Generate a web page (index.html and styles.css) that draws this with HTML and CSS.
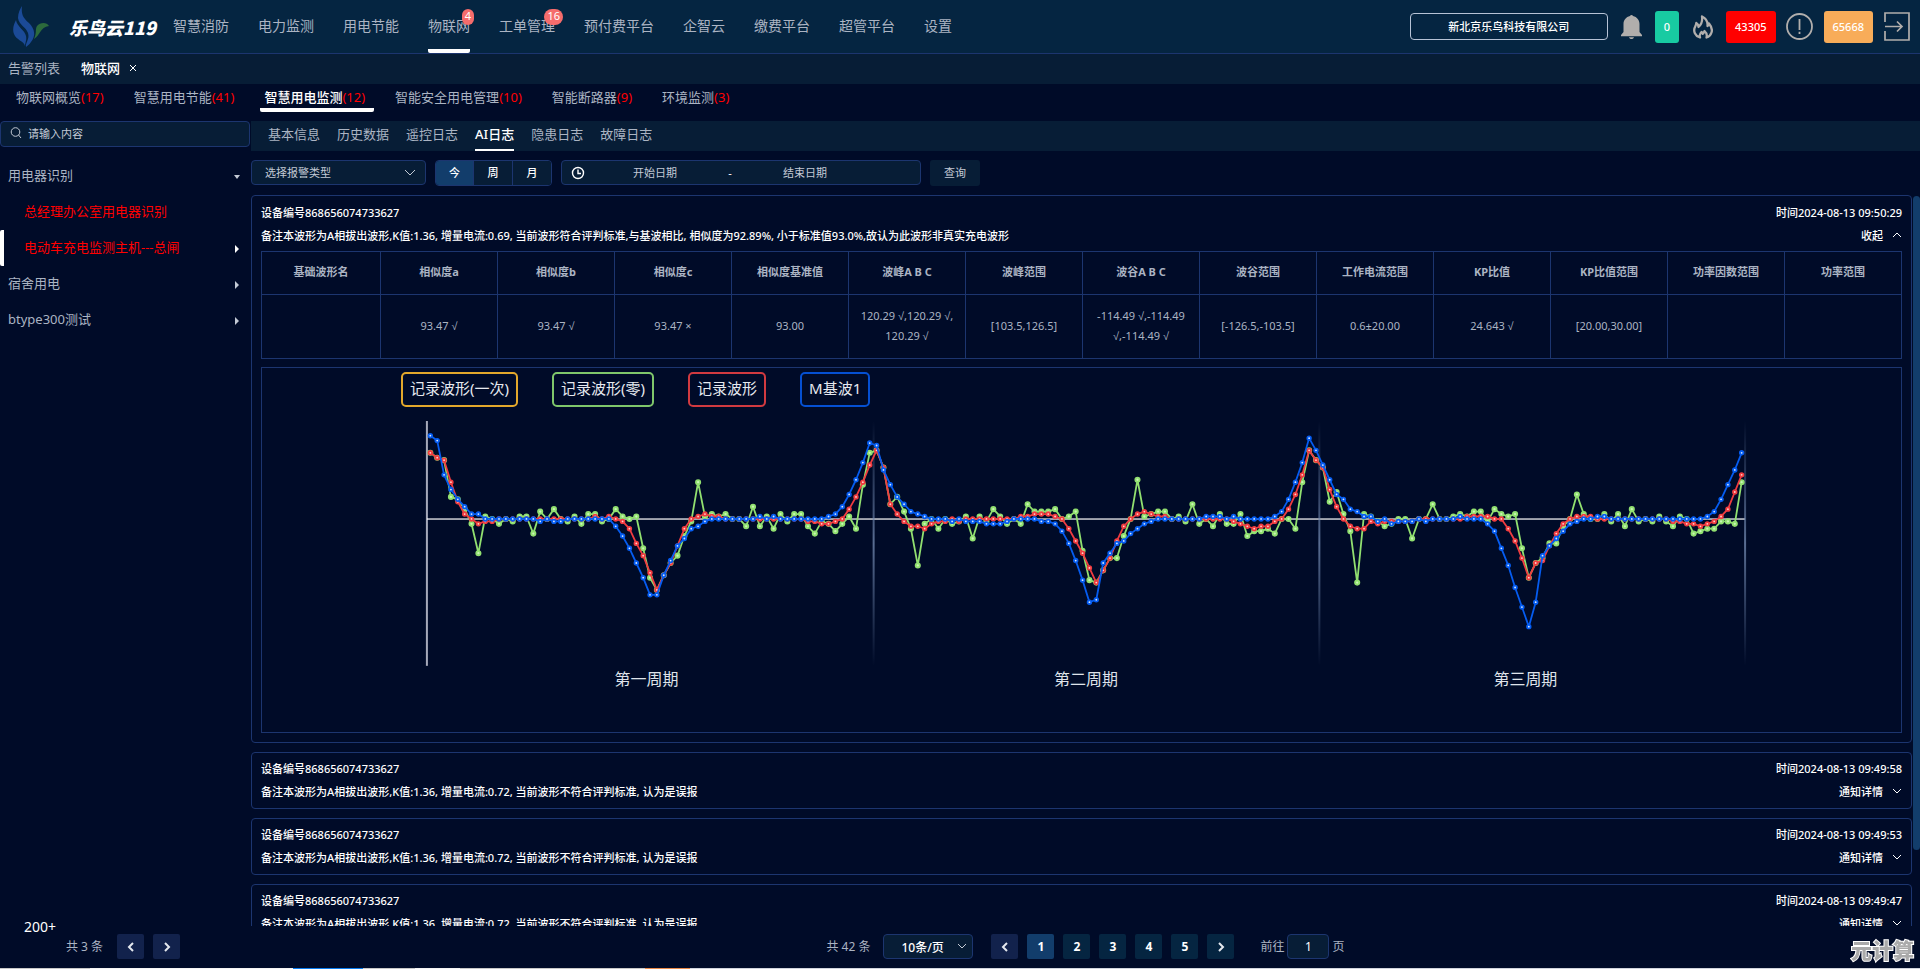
FILE: index.html
```html
<!DOCTYPE html>
<html lang="zh-CN">
<head>
  <meta charset="UTF-8">
  <title>乐鸟云119</title>
  <link rel="stylesheet" href="styles.css">
</head>
<body>

  <!-- 顶部导航 -->
  <header class="header">
    <svg class="logo" viewBox="0 0 36 41">
      <path fill="#1b4a97" d="M9 0 C8 8 10 12 16 17 C22 23 23 30 18 36 C16 39 14 40 13 41 C12 37 17 33 15 27 C13 21 6 19 5 12 C5 7 7 3 9 0z"/>
      <path fill="#1b4a97" d="M3 14 C4 21 12 24 13 30 C14 34 12 37 12 40 C11 35 3 34 1 28 C-1 23 1 18 3 14z"/>
      <path fill="#2c6a3c" d="M36 20 C34 16 27 16 24 20 C22 23 24 27 21 33 C27 30 27 21 36 20z"/>
    </svg>
    <h1 class="brand">乐鸟云119</h1>
    <nav class="top-nav">
      <a href="#">智慧消防</a>
      <a href="#">电力监测</a>
      <a href="#">用电节能</a>
      <a href="#" class="active">物联网<span class="badge">4</span></a>
      <a href="#">工单管理<span class="badge">16</span></a>
      <a href="#">预付费平台</a>
      <a href="#">企智云</a>
      <a href="#">缴费平台</a>
      <a href="#">超管平台</a>
      <a href="#">设置</a>
    </nav>
    <div class="tools">
      <input class="company" type="text" aria-label="公司" value="新北京乐鸟科技有限公司" readonly>
      <svg class="bell" viewBox="0 0 21 25"><path fill="#b1aeac" d="M9 2a1.6 1.6 0 0 1 3 0c4 1 6.500 4 6.500 8v8l2.500 3v1.200H0V21l2.500-3v-8c0-4 2.500-7 6.500-8zM8 23.200h5c-.5 2.400-4.500 2.400-5 0z"/></svg>
      <button class="count green">0</button>
      <svg class="flame" viewBox="0 0 20 24"><path fill="none" stroke="#b1aeac" stroke-width="2.300" stroke-linejoin="round" d="M7 22.500C2 21 0 16 2 12c.6-1.500 1.200-2.600 1.300-4C5 9 5.500 10.500 5.500 12 9 9 9.500 5 9 1.500c4 2 6 5.500 5.500 9.500 1-.3 1.400-1 1.500-2.500 2.500 3 3.500 6 2.500 9-.8 2.600-2.500 4.300-5 5 .8-2.500.3-4.500-2-6.500-.4 1.500-.8 2-1.800 2.800-.3-1-.6-1.300-1.200-1.800C7 18.500 6 20 7 22.500z"/></svg>
      <button class="count red">43305</button>
      <svg class="warn" viewBox="0 0 27 27"><circle cx="13.500" cy="13.500" r="12.500" fill="none" stroke="#b1aeac" stroke-width="1.800"/><path stroke="#b1aeac" stroke-width="1.800" d="M13.500 6v11M13.500 18.800v2.200"/></svg>
      <button class="count orange">65668</button>
      <svg class="exit" viewBox="0 0 26 29"><path fill="none" stroke="#b1aeac" stroke-width="1.700" d="M1 10V1h24v27H1v-9M1 14.500h17M13 9.500l5 5-5 5"/></svg>
    </div>
  </header>

  <!-- 已打开的标签 -->
  <div class="page-tabs">
    <a href="#">告警列表</a>
    <a href="#" class="active">物联网</a>
    <button class="close" aria-label="关闭"><svg viewBox="0 0 8 8"><path stroke="#fff" d="M1 1l6 6M7 1L1 7"/></svg></button>
  </div>

  <nav class="sub-nav">
    <a href="#">物联网概览<span>(17)</span></a>
    <a href="#">智慧用电节能<span>(41)</span></a>
    <a href="#" class="active">智慧用电监测<span>(12)</span></a>
    <a href="#">智能安全用电管理<span>(10)</span></a>
    <a href="#">智能断路器<span>(9)</span></a>
    <a href="#">环境监测<span>(3)</span></a>
  </nav>

  <div class="content">
    <!-- 左侧设备树 -->
    <aside class="sidebar">
      <label class="search">
        <svg viewBox="0 0 12 12"><circle cx="5.500" cy="5" r="4.300" fill="none" stroke="#c3cad5"/><path stroke="#c3cad5" d="M8.500 8l2.500 3"/></svg>
        <input type="text" placeholder="请输入内容">
      </label>
      <ul class="tree">
        <li>用电器识别<svg viewBox="0 0 6 6"><path fill="#c3cad5" d="M0 1h6L3 5z"/></svg></li>
        <li class="child">总经理办公室用电器识别</li>
        <li class="child current">电动车充电监测主机---总闸<svg viewBox="0 0 6 8"><path fill="#fff" d="M1 0l4 4-4 4z"/></svg></li>
        <li>宿舍用电<svg viewBox="0 0 6 8"><path fill="#c3cad5" d="M1 0l4 4-4 4z"/></svg></li>
        <li>btype300测试<svg viewBox="0 0 6 8"><path fill="#c3cad5" d="M1 0l4 4-4 4z"/></svg></li>
      </ul>
      <div class="over">200+</div>
      <div class="pager side-pager">
        <span class="total">共 3 条</span>
        <button class="arrow" aria-label="上一页"><svg viewBox="0 0 8 10"><path d="M6 1L2 5l4 4"/></svg></button>
        <button class="arrow" aria-label="下一页"><svg viewBox="0 0 8 10"><path d="M2 1l4 4-4 4"/></svg></button>
      </div>
    </aside>

    <main class="main">
      <nav class="log-tabs">
        <a href="#">基本信息</a>
        <a href="#">历史数据</a>
        <a href="#">遥控日志</a>
        <a href="#" class="active">AI日志</a>
        <a href="#">隐患日志</a>
        <a href="#">故障日志</a>
      </nav>

      <!-- 筛选条件 -->
      <div class="filter">
        <div class="select-box type">
          <select aria-label="报警类型"><option>选择报警类型</option></select>
          <svg viewBox="0 0 10 6"><path d="M0 0l5 5 5-5"/></svg>
        </div>
        <div class="range-btns">
          <button class="on">今</button><button>周</button><button>月</button>
        </div>
        <div class="dates">
          <svg viewBox="0 0 14 14"><circle cx="7" cy="7" r="5.500"/><path d="M7 3.500V7.500h3"/></svg>
          <input type="text" aria-label="开始日期" placeholder="开始日期">
          <span>-</span>
          <input type="text" aria-label="结束日期" placeholder="结束日期">
        </div>
        <button class="query">查询</button>
      </div>

      <!-- 日志列表 -->
      <div class="list-wrap">
        <div class="list">
          <section class="card">
            <div class="line"><span>设备编号868656074733627</span><span>时间2024-08-13 09:50:29</span></div>
            <div class="line">
              <span>备注本波形为A相拔出波形,K值:1.36, 增量电流:0.69, 当前波形符合评判标准,与基波相比, 相似度为92.89%, 小于标准值93.0%,故认为此波形非真实充电波形</span>
              <button class="toggle">收起<svg viewBox="0 0 8 5"><path d="M0 5l4-4 4 4"/></svg></button>
            </div>
            <table class="wave-table">
              <tr>
                <th class="name">基础波形名</th><th>相似度a</th><th>相似度b</th><th>相似度c</th><th>相似度基准值</th>
                <th>波峰A B C</th><th>波峰范围</th><th>波谷A B C</th><th>波谷范围</th><th>工作电流范围</th>
                <th>KP比值</th><th>KP比值范围</th><th>功率因数范围</th><th>功率范围</th>
              </tr>
              <tr>
                <td></td>
                <td>93.47 <i>√</i></td>
                <td>93.47 <i>√</i></td>
                <td>93.47 ×</td>
                <td>93.00</td>
                <td>120.29 <i>√</i>,120.29 <i>√</i>,<br>120.29 <i>√</i></td>
                <td>[103.5,126.5]</td>
                <td>-114.49 <i>√</i>,-114.49<br><i>√</i>,-114.49 <i>√</i></td>
                <td>[-126.5,-103.5]</td>
                <td>0.6±20.00</td>
                <td>24.643 <i>√</i></td>
                <td>[20.00,30.00]</td>
                <td></td>
                <td></td>
              </tr>
            </table>
            <div class="chart">
              <div class="legend">
                <button class="yellow">记录波形(一次)</button>
                <button class="lime">记录波形(零)</button>
                <button class="crimson">记录波形</button>
                <button class="blue">M基波1</button>
              </div>
              <svg id="wave" class="wave" viewBox="0 0 1640 325">
                <defs>
                  <linearGradient id="fade" x1="0" y1="0" x2="0" y2="1">
                    <stop offset="0" stop-color="#6f86ad" stop-opacity="0"/>
                    <stop offset="0.500" stop-color="#6f86ad" stop-opacity="0.800"/>
                    <stop offset="1" stop-color="#6f86ad" stop-opacity="0"/>
                  </linearGradient>
                </defs>
              </svg>
            </div>
          </section>

          <section class="card">
            <div class="line"><span>设备编号868656074733627</span><span>时间2024-08-13 09:49:58</span></div>
            <div class="line">
              <span>备注本波形为A相拔出波形,K值:1.36, 增量电流:0.72, 当前波形不符合评判标准, 认为是误报</span>
              <button class="toggle">通知详情<svg viewBox="0 0 8 5"><path d="M0 0l4 4 4-4"/></svg></button>
            </div>
          </section>

          <section class="card">
            <div class="line"><span>设备编号868656074733627</span><span>时间2024-08-13 09:49:53</span></div>
            <div class="line">
              <span>备注本波形为A相拔出波形,K值:1.36, 增量电流:0.72, 当前波形不符合评判标准, 认为是误报</span>
              <button class="toggle">通知详情<svg viewBox="0 0 8 5"><path d="M0 0l4 4 4-4"/></svg></button>
            </div>
          </section>

          <section class="card">
            <div class="line"><span>设备编号868656074733627</span><span>时间2024-08-13 09:49:47</span></div>
            <div class="line">
              <span>备注本波形为A相拔出波形,K值:1.36, 增量电流:0.72, 当前波形不符合评判标准, 认为是误报</span>
              <button class="toggle">通知详情<svg viewBox="0 0 8 5"><path d="M0 0l4 4 4-4"/></svg></button>
            </div>
          </section>
        </div>
        <div class="scrollbar"><div class="thumb"></div></div>
      </div>

      <div class="pager main-pager">
        <span class="total">共 42 条</span>
        <div class="select-box size">
          <select aria-label="每页条数"><option>10条/页</option></select>
          <svg viewBox="0 0 10 6"><path d="M1 0l4 4 4-4"/></svg>
        </div>
        <button class="arrow" aria-label="上一页"><svg viewBox="0 0 8 10"><path d="M6 1L2 5l4 4"/></svg></button>
        <button class="on">1</button>
        <button>2</button>
        <button>3</button>
        <button>4</button>
        <button>5</button>
        <button aria-label="下一页"><svg viewBox="0 0 8 10"><path d="M2 1l4 4-4 4"/></svg></button>
        <label class="jump">前往<input type="text" value="1">页</label>
      </div>
    </main>
  </div>

  <div class="bottom-strip"></div>
  <div class="watermark">元计算</div>

  <script src="wave.js"></script>
</body>
</html>
```

FILE: styles.css
```css
* {
  box-sizing: border-box;
}
body {
  margin: 0;
  height: 100vh;
  overflow: hidden;
  display: flex;
  flex-direction: column;
  background: #000b28;
  color: #fff;
  font-family: "Noto Sans", "Noto Sans CJK SC", sans-serif;
  font-size: 11px;
}
a {
  color: #abb4c3;
  text-decoration: none;
}
button, input, select {
  font: inherit;
  color: inherit;
  border: none;
  padding: 0;
  margin: 0;
  outline: none;
  background: none;
}
button {
  cursor: pointer;
}
svg {
  display: block;
  flex: none;
}

/* 顶部 */
.header {
  height: 54px;
  flex: none;
  display: flex;
  align-items: center;
  padding: 0 10px 0 13px;
  background: #052541;
  border-bottom: 1px solid #1c356f;
}
.logo {
  width: 36px;
  height: 41px;
}
.brand {
  margin: 0 16px 0 20px;
  width: 88px;
  white-space: nowrap;
  font-family: "Noto Sans CJK SC", sans-serif;
  font-size: 18px;
  line-height: 28px;
  font-weight: 900;
  font-style: italic;
}
.top-nav {
  display: flex;
  gap: 29px;
  height: 53px;
}
.top-nav a {
  position: relative;
  font-size: 14px;
  line-height: 52px;
  white-space: nowrap;
}
.top-nav .active {
  border-bottom: 4px solid #fff;
  border-radius: 2px;
}
.badge {
  position: absolute;
  top: 9px;
  right: -4px;
  padding: 0 3px;
  height: 16px;
  border-radius: 8px;
  background: #f56c6c;
  color: #fff;
  font-size: 11px;
  line-height: 14px;
}
.top-nav a:nth-child(5) .badge {
  right: -8px;
}
.tools {
  margin-left: auto;
  display: flex;
  align-items: center;
}
.company {
  width: 198px;
  height: 27px;
  padding-bottom: 1px;
  border: 1px solid #b7c3d6;
  border-radius: 4px;
  text-align: center;
  font-weight: 500;
}
.bell {
  width: 21px;
  height: 25px;
  margin: 0 13px;
}
.flame {
  width: 20px;
  height: 24px;
  margin: 0 13px 0 14px;
}
.warn {
  width: 27px;
  height: 27px;
  margin: 0 11px 0 10px;
}
.exit {
  width: 26px;
  height: 29px;
  margin-left: 11px;
}
.count {
  height: 32px;
  padding: 0 9px;
  min-width: 24px;
  border-radius: 3px;
  font-weight: 500;
}
.green {
  background: #18cba2;
}
.red {
  background: #f00;
}
.orange {
  background: #f8ac59;
}

/* 标签 */
.page-tabs {
  height: 30px;
  flex: none;
  display: flex;
  align-items: center;
  padding: 0 0 3px 8px;
  background: #071d36;
  font-size: 13px;
}
.page-tabs a {
  margin-right: 21px;
}
.page-tabs .active {
  color: #fff;
  margin-right: 9px;
  font-weight: 500;
}
.close svg {
  width: 8px;
  height: 8px;
}
.sub-nav {
  height: 37px;
  flex: none;
  display: flex;
  gap: 17px;
  padding-left: 12px;
  font-size: 13px;
}
.sub-nav a {
  height: 28px;
  padding: 0 9px 0 4px;
  line-height: 27px;
}
.sub-nav .active {
  color: #fff;
  font-weight: 500;
  border-bottom: 4px solid #fff;
  border-radius: 2px;
}
.sub-nav span {
  color: #f00;
  font-weight: 400;
}
.content {
  flex: 1;
  min-height: 0;
  display: flex;
}

/* 左侧 */
.sidebar {
  width: 251px;
  flex: none;
  display: flex;
  flex-direction: column;
}
.search {
  width: 250px;
  height: 26px;
  display: flex;
  align-items: center;
  padding: 0 0 2px 9px;
  gap: 6px;
  background: #071d36;
  border: 1px solid #1c356f;
  border-radius: 4px;
}
.search svg {
  width: 12px;
  height: 12px;
}
.search input {
  flex: 1;
}
::placeholder {
  color: #c3cad5;
  opacity: 1;
}
.tree {
  list-style: none;
  margin: 11px 0 0;
  padding: 0;
}
.tree li {
  height: 36px;
  display: flex;
  align-items: center;
  justify-content: space-between;
  padding: 0 11px 3px 8px;
  color: #abb4c3;
  font-size: 13px;
}
.tree li svg {
  width: 6px;
  height: 8px;
  margin-top: 4px;
}
.tree .child {
  padding-left: 24px;
  color: #f00;
}
.tree .current {
  padding-left: 20px;
  border-left: 4px solid #fff;
  border-radius: 2px;
}
.over {
  margin-top: auto;
  padding-left: 24px;
  font-size: 14px;
  line-height: 14px;
}

/* 分页 */
.pager {
  height: 42px;
  flex: none;
  display: flex;
  gap: 9px;
  padding-top: 8px;
  font-size: 12px;
  line-height: 25px;
  color: #abb4c3;
}
.pager button {
  width: 27px;
  height: 25px;
  border-radius: 2px;
  background: #052541;
  color: #fff;
  font-weight: 700;
}
.pager .arrow {
  background: #12224c;
}
.pager .on {
  background: #123d6b;
}
.pager button svg {
  width: 8px;
  height: 10px;
  margin: 0 auto;
  fill: none;
  stroke: #e4e8ee;
  stroke-width: 2;
}
.side-pager {
  height: 34px;
  padding-top: 0;
  padding-left: 66px;
}
.side-pager .total {
  margin-right: 5px;
}
.main-pager {
  justify-content: center;
}
.main-pager .total {
  margin-right: 4px;
}
.jump {
  margin-left: 17px;
  display: flex;
  gap: 3px;
}
.jump input {
  width: 42px;
  height: 25px;
  border: 1px solid #1c356f;
  border-radius: 4px;
  background: #071d36;
  color: #fff;
  text-align: center;
}

/* 右侧 */
.main {
  flex: 1;
  min-width: 0;
  display: flex;
  flex-direction: column;
}
.log-tabs {
  height: 30px;
  flex: none;
  display: flex;
  gap: 17px;
  padding-left: 17px;
  background: #071d36;
  font-size: 13px;
  line-height: 26px;
}
.log-tabs .active {
  color: #fff;
  font-weight: 500;
  border-bottom: 2px solid #fff;
}
.filter {
  display: flex;
  gap: 9px;
  padding: 9px 0;
}
.select-box {
  position: relative;
  height: 25px;
  border: 1px solid #1c356f;
  border-radius: 4px;
  background: #071d36;
  color: #c3cad5;
}
.select-box select {
  width: 100%;
  height: 100%;
  appearance: none;
}
.select-box svg {
  position: absolute;
  right: 10px;
  top: 9px;
  width: 10px;
  height: 6px;
  fill: none;
  stroke: #c3cad5;
  pointer-events: none;
}
.type {
  width: 175px;
}
.type select {
  padding-left: 13px;
}
.size {
  width: 90px;
  margin-right: 9px;
}
.size select {
  padding-left: 17px;
  color: #fff;
  font-weight: 500;
}
.size svg {
  right: 5px;
}
.range-btns {
  display: flex;
  height: 26px;
  border: 1px solid #1c356f;
  border-radius: 4px;
  overflow: hidden;
}
.range-btns button {
  width: 39px;
  padding-bottom: 2px;
  background: #071d36;
  font-weight: 500;
}
.range-btns button + button {
  border-left: 1px solid #1c356f;
}
.range-btns .on {
  width: 37px;
  background: #123d6b;
}
.dates {
  width: 360px;
  height: 25px;
  display: flex;
  align-items: center;
  padding-left: 9px;
  border: 1px solid #1c356f;
  border-radius: 4px;
  background: #071d36;
}
.dates svg {
  width: 14px;
  height: 14px;
  fill: none;
  stroke: #fff;
  stroke-width: 1.4;
}
.dates input {
  width: 140px;
  text-align: center;
}
.dates span {
  width: 10px;
  text-align: center;
}
.query {
  width: 50px;
  height: 26px;
  padding-bottom: 2px;
  border-radius: 3px;
  background: #071d36;
  color: #c3cad5;
}
.list-wrap {
  flex: 1;
  min-height: 0;
  display: flex;
  gap: 1px;
}
.list {
  flex: 1;
  min-width: 0;
  overflow: hidden;
}
.scrollbar {
  width: 7px;
}
.thumb {
  margin-top: 1px;
  height: 89.5%;
  border-radius: 4px;
  background: #123d6b;
}
.card {
  margin-bottom: 9px;
  padding: 4px 9px 5px;
  border: 1px solid #1c356f;
  border-radius: 4px;
}
.line {
  height: 23px;
  display: flex;
  justify-content: space-between;
  align-items: center;
  font-weight: 500;
  white-space: nowrap;
}
.toggle {
  display: flex;
  align-items: center;
  gap: 10px;
  padding-right: 1px;
}
.toggle svg {
  width: 8px;
  height: 5px;
  fill: none;
  stroke: #fff;
}
.wave-table {
  width: 100%;
  margin: 5px 0 8px;
  border-collapse: collapse;
  table-layout: fixed;
  color: #abb4c3;
  line-height: 20px;
  text-align: center;
}
.wave-table th, .wave-table td {
  padding: 0 0 2px;
  border: 1px solid #1c356f;
}
.wave-table th {
  height: 43px;
}
.wave-table td {
  height: 64px;
}
.wave-table .name {
  width: 119px;
}
.wave-table i {
  font-family: "Liberation Sans", sans-serif;
  font-style: normal;
}

/* 波形图 */
.chart {
  margin-bottom: 4px;
  padding-top: 4px;
  border: 1px solid #1c356f;
}
.legend {
  display: flex;
  gap: 34px;
  padding-left: 139px;
}
.legend button {
  height: 35px;
  padding: 0 7px 5px;
  border: 2px solid;
  border-radius: 5px;
  font-size: 15px;
  color: #e6e9ef;
}
.legend .yellow {
  border-color: #e3a82c;
}
.legend .lime {
  border-color: #7fc76b;
}
.legend .crimson {
  border-color: #d13a40;
}
.legend .blue {
  border-color: #0550d2;
}
.wave {
  width: 100%;
}
.wave text {
  font-size: 16px;
  fill: #dfe3ea;
  text-anchor: middle;
}

.bottom-strip {
  flex: none;
  height: 1px;
  background: linear-gradient(to right, #c8c8c8 90px, #f4f4f4 90px 293px, #0a7cf0 293px 363px, #c8c8c8 363px 415px, #f4f4f4 415px 460px, #c8c8c8 460px 645px, #e98a4a 645px 690px, #d0d4dc 690px);
}
.watermark {
  position: fixed;
  right: 6px;
  bottom: 8px;
  font-family: "Noto Sans CJK SC", sans-serif;
  font-size: 21px;
  line-height: 24px;
  font-weight: 900;
  color: #aaa;
  -webkit-text-stroke: 2px #fff;
  paint-order: stroke fill;
}
```

FILE: wave.js
```js
const svg = document.getElementById('wave');

// 坐标范围: x 165~1484, y 40~-60
const left = 165, right = 1484, top0 = 14, bottom = 259;
const count = 192;
const step = (right - left) / count;

const zero = [
  27,25,24,9,8,4,-2,-14,1,0,-2,0,-1,1,1,-6,3,0,4,0,-1,1,-2,2,2,-1,0,4,1,0,1,-12,-24,-29,-23,-18,-15,-7,-1,15,1,2,1,2,0,0,-3,5,-3,1,-4,2,-1,2,2,-3,-6,-1,-2,-5,-2,1,-4,14,
  27,28,21,6,9,3,-4,-19,-2,0,-4,0,-2,-1,1,-8,1,-1,4,1,-2,0,-2,6,3,3,3,4,0,1,3,-13,-25,-26,-21,-16,-16,-7,0,16,1,2,3,3,0,1,-1,6,-2,0,-3,2,-2,-2,2,-7,-5,-5,-4,-6,0,0,-4,15,
  28,24,21,7,11,2,-5,-26,2,1,-1,-3,-2,0,0,-8,0,0,6,0,0,1,2,1,3,3,-1,4,2,1,2,-12,-24,-18,-16,-10,-10,-3,0,10,2,0,0,2,-1,2,-3,4,-1,0,-1,1,-1,-3,1,0,-6,-5,-4,-4,-1,-1,-2,15
];
const record = [
  27,25,24,15,7,2,0,-2,-1,-1,0,0,0,0,0,0,0,0,0,0,0,0,0,0,1,0,1,0,-1,-4,-10,-15,-22,-29,-23,-18,-11,-4,0,1,2,1,1,0,0,0,0,0,0,0,0,0,0,0,0,-1,-1,-2,-2,-1,0,4,9,15,
  22,28,21,6,2,-1,-3,-3,-4,-2,-1,-1,0,-1,0,0,0,0,0,0,0,0,1,1,2,2,2,1,0,-4,-9,-14,-20,-26,-21,-16,-9,-3,0,2,3,2,1,1,0,0,0,0,0,0,0,0,0,-1,-2,-3,-4,-3,-3,-1,0,4,10,18,
  28,24,21,12,5,0,-3,-4,-4,-1,-2,-1,-1,-1,-1,-1,0,0,0,0,0,0,0,1,1,1,1,0,0,-4,-9,-16,-24,-18,-17,-11,-6,-2,0,1,1,1,0,0,0,0,0,0,0,0,0,0,0,-1,-1,-2,-2,-3,-2,-1,1,4,11,18
];
const base = [
  34,32,18,12,8,5,2,2,0,0,0,0,0,0,0,0,-1,0,-1,-1,0,0,0,0,0,0,0,-3,-7,-12,-18,-24,-31,-31,-23,-17,-11,-8,-4,-3,-1,0,0,0,0,0,0,0,1,0,1,0,0,0,0,0,0,0,1,2,5,10,16,23,
  31,30,20,14,9,6,3,2,1,0,0,0,-1,0,-1,-1,-1,-2,-2,-2,-1,0,0,0,0,-1,-1,-2,-5,-10,-17,-25,-34,-33,-18,-14,-10,-9,-6,-4,-2,-1,0,0,0,0,0,0,0,1,1,1,0,1,0,0,0,0,0,1,3,8,15,23,
  33,28,22,16,10,8,4,3,1,1,-1,0,-2,-1,-1,-1,0,-1,0,0,0,0,1,0,0,0,-2,-5,-12,-19,-28,-36,-44,-34,-15,-11,-8,-5,-2,-1,0,0,1,1,0,0,0,0,0,0,0,0,0,0,0,0,0,0,1,3,8,14,20,27
];

function add(name, attrs) {
  const el = document.createElementNS('http://www.w3.org/2000/svg', name);
  for (const key in attrs) el.setAttribute(key, attrs[key]);
  svg.appendChild(el);
  return el;
}

function getY(v) {
  return top0 + (40 - v) * (bottom - top0) / 100;
}

// 坐标轴
add('rect', { x: left - 1, y: top0, width: 2, height: bottom - top0, fill: '#a5a9b9' });
add('rect', { x: left, y: 111.5, width: right - left, height: 1.2, fill: '#fff' });

// 周期分隔线
[65, 130, 192].forEach(n => {
  add('rect', { x: Math.round(left + n * step) - 1, y: top0, width: 2, height: bottom - top0, fill: 'url(#fade)' });
});

// 周期名称
['第一周期', '第二周期', '第三周期'].forEach((name, i) => {
  add('text', { x: left + (i * 64 + 32) * step, y: 278 }).textContent = name;
});

function drawLine(data, color, center, r, w) {
  const points = data.map((v, i) => [left + (i + 0.5) * step, getY(v)]);
  add('polyline', { points: points.join(' '), fill: 'none', stroke: color, 'stroke-width': 1.8, 'stroke-linejoin': 'round' });
  points.forEach(p => {
    add('circle', { cx: p[0], cy: p[1], r: r, fill: center, stroke: color, 'stroke-width': w });
  });
}

drawLine(zero, '#91e070', '#c9f5b5', 2.1, 1.9);
drawLine(record, '#f03c40', '#ffd0c8', 1.8, 1.8);
drawLine(base, '#055cf0', '#d4e6ff', 1.8, 1.8);
```
